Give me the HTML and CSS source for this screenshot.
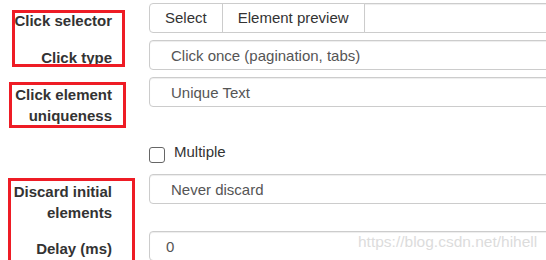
FILE: index.html
```html
<!DOCTYPE html>
<html>
<head>
<meta charset="utf-8">
<link rel="stylesheet" href="styles.css">
</head>
<body>
<div class="form">
  <div class="group">
    <div class="label">Click selector</div>
    <div class="input-group">
      <span class="btn first">Select</span>
      <span class="btn">Element preview</span>
      <span class="control fill"></span>
    </div>
  </div>
  <div class="group">
    <div class="label">Click type</div>
    <div class="control select">Click once (pagination, tabs)</div>
  </div>
  <div class="group">
    <div class="label">Click element<br>uniqueness</div>
    <div class="control select">Unique Text</div>
  </div>
  <div class="group check-row">
    <div class="label"></div>
    <label class="check"><span class="box"></span><span class="check-text">Multiple</span></label>
  </div>
  <div class="group">
    <div class="label">Discard initial<br>elements</div>
    <div class="control select">Never discard</div>
  </div>
  <div class="group">
    <div class="label">Delay (ms)</div>
    <div class="control text">0</div>
  </div>
</div>
<div class="mark mark1"></div>
<div class="mark mark2"></div>
<div class="mark mark3"></div>
<div class="watermark">https://blog.csdn.net/hihell</div>
</body>
</html>
```
FILE: styles.css
```css
html, body {
  margin: 0;
  padding: 0;
}
body {
  width: 546px;
  height: 260px;
  overflow: hidden;
  position: relative;
  background: #fff;
  font-family: "Liberation Sans", Arial, sans-serif;
  font-size: 15px;
  color: #333;
}
.form {
  padding-top: 3px;
}
.group {
  display: grid;
  grid-template-columns: 112px 640px;
  column-gap: 37px;
  margin-bottom: 7px;
}
.label {
  text-align: right;
  font-weight: bold;
  color: #333;
  line-height: 21px;
  padding: 7px 0 1px;
}
.input-group {
  display: flex;
  height: 30px;
}
.btn {
  box-sizing: border-box;
  height: 30px;
  line-height: 28px;
  padding: 0 15px;
  border: 1px solid #ccc;
  background: #fff;
  color: #333;
  white-space: nowrap;
  margin-left: -1px;
}
.btn.first {
  margin-left: 0;
  border-radius: 4px 0 0 4px;
}
.control {
  box-sizing: border-box;
  height: 30px;
  line-height: 21px;
  padding: 3.5px 16px;
  border: 1px solid #ccc;
  border-radius: 4px;
  background: #fff;
  color: #555;
  box-shadow: inset 0 1px 1px rgba(0, 0, 0, 0.075);
  white-space: nowrap;
}
.control.fill {
  flex: 1;
  margin-left: -1px;
  border-radius: 0 4px 4px 0;
}
.control.select {
  padding-left: 21px;
}
.check-row {
  height: 33px;
}
.check-row .label {
  padding: 0;
}
.check {
  display: flex;
  align-items: flex-start;
  gap: 9px;
  color: #333;
}
.box {
  box-sizing: border-box;
  width: 16px;
  height: 16px;
  margin-top: 13px;
  border: 1px solid #666;
  border-radius: 3px;
  background: #fff;
}
.check-text {
  line-height: 21px;
  padding-top: 7px;
}
.mark {
  position: absolute;
  box-sizing: border-box;
  border: 3px solid #ee1c25;
}
.mark1 {
  left: 12px;
  top: 10px;
  width: 113px;
  height: 57px;
}
.mark2 {
  left: 9px;
  top: 82px;
  width: 117px;
  height: 46px;
}
.mark3 {
  left: 8px;
  top: 178px;
  width: 127px;
  height: 100px;
}
.watermark {
  position: absolute;
  left: 358px;
  top: 232px;
  font-size: 15.5px;
  line-height: 20px;
  color: #dcdcdc;
  white-space: nowrap;
}
```
